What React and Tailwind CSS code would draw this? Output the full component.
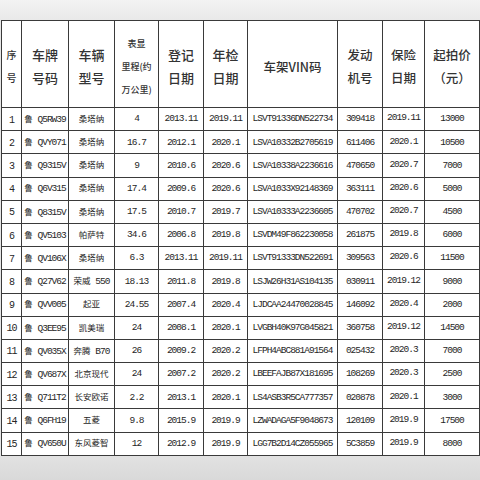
import React from "react";

const rows = [
  ["1", "鲁 Q5RW39", "桑塔纳", "4", "2013.11", "2019.11", "LSVT91336DN522734", "309418", "2019.11", "13000"],
  ["2", "鲁 QVY071", "桑塔纳", "16.7", "2012.1", "2020.1", "LSVA10332B2705619", "611406", "2020.1", "10500"],
  ["3", "鲁 Q9315V", "桑塔纳", "9", "2010.6", "2020.6", "LSVA10338A2236616", "470650", "2020.7", "7000"],
  ["4", "鲁 Q6V315", "桑塔纳", "17.4", "2009.6", "2020.6", "LSVA1033X92148369", "363111", "2020.6", "5000"],
  ["5", "鲁 Q8315V", "桑塔纳", "17.5", "2010.7", "2019.7", "LSVA10333A2236605", "470702", "2020.7", "4500"],
  ["6", "鲁 QV5103", "帕萨特", "34.6", "2006.8", "2019.8", "LSVDM49F862230058", "261875", "2019.8", "6000"],
  ["7", "鲁 QV106X", "桑塔纳", "6.3", "2013.11", "2019.11", "LSVT91333DN522691", "309563", "2020.6", "11500"],
  ["8", "鲁 Q27V62", "荣威 550", "18.13", "2011.8", "2019.8", "LSJW26H31AS104135", "030911", "2019.12", "9000"],
  ["9", "鲁 QVV005", "起亚", "24.55", "2007.4", "2020.4", "LJDCAA24470028845", "146092", "2020.4", "2000"],
  ["10", "鲁 Q3EE95", "凯美瑞", "24", "2008.1", "2020.1", "LVGBH40K97G045821", "360758", "2019.12", "14500"],
  ["11", "鲁 QV035X", "奔腾 B70", "26", "2009.2", "2020.2", "LFPH4ABC881A91564", "025432", "2020.3", "7000"],
  ["12", "鲁 QV687X", "北京现代", "24", "2007.2", "2020.2", "LBEEFAJB87X181695", "108269", "2020.3", "2500"],
  ["13", "鲁 Q711T2", "长安欧诺", "2.2", "2013.1", "2020.1", "LS4ASB3R5CA777357", "020878", "2020.1", "3000"],
  ["14", "鲁 Q6FH19", "五菱", "9.8", "2015.9", "2019.9", "LZWADAGA5F9048673", "120109", "2019.9", "17500"],
  ["15", "鲁 QV650U", "东风菱智", "12", "2012.9", "2019.9", "LGG7B2D14CZ055965", "5C3859", "2019.9", "8000"],
];

const widths = [20, 47, 46, 44, 45, 44, 90, 45, 42, 55];

const headers = [
  { lines: ["序", "号"], cls: "text-[10px] leading-[23px]" },
  { lines: ["车牌", "号码"], cls: "text-[13px] leading-[23px]" },
  { lines: ["车辆", "型号"], cls: "text-[13px] leading-[23px]" },
  { lines: ["表显", "里程(约", "万公里)"], cls: "text-[9px] leading-[23px]" },
  { lines: ["登记", "日期"], cls: "text-[13px] leading-[23px]" },
  { lines: ["年检", "日期"], cls: "text-[13px] leading-[23px]" },
  { lines: ["车架VIN码"], cls: "text-[12.5px] leading-[23px]" },
  { lines: ["发动", "机号"], cls: "text-[12.5px] leading-[23px]" },
  { lines: ["保险", "日期"], cls: "text-[12.5px] leading-[23px]" },
  { lines: ["起拍价", "（元）"], cls: "text-[12.5px] leading-[23px]" },
];

// chinese runs get their own size, ascii stays mono
function Cell({ text }) {
  const parts = text.split(/([\u4e00-\u9fff]+)/).filter(Boolean);
  return parts.map((p, i) =>
    /[\u4e00-\u9fff]/.test(p) ? (
      <span key={i} className="text-[8.5px] tracking-normal" style={{ fontFamily: '"Noto Sans CJK SC", sans-serif' }}>
        {p}
      </span>
    ) : (
      <span key={i}>{p}</span>
    )
  );
}

export default function App() {
  return (
    <div className="flex h-[480px] w-[480px] flex-col overflow-hidden bg-[#e6e6e6]">
      <div className="h-[20px] shrink-0 bg-gradient-to-b from-[#f3f3f3] to-[#e9e9e9]" />
      <table className="ml-[1px] w-[478px] table-fixed border-collapse bg-white text-[#333]">
        <colgroup>
          {widths.map((w, i) => (
            <col key={i} style={{ width: w }} />
          ))}
        </colgroup>
        <thead>
          <tr className="h-[87px]">
            {headers.map((h, i) => (
              <th
                key={i}
                className={`border border-[#3a3a3a] p-0 pt-[4px] text-center align-middle font-medium ${h.cls}`}
                style={{ fontFamily: '"Noto Sans CJK SC", sans-serif' }}
              >
                {h.lines.map((l, j) => (
                  <div key={j} className="whitespace-nowrap">{l}</div>
                ))}
              </th>
            ))}
          </tr>
        </thead>
        <tbody style={{ fontFamily: '"Liberation Mono", "Noto Sans CJK SC", monospace' }}>
          {rows.map((r, i) => (
            <tr key={i} className="h-[23.2px]">
              {r.map((c, j) => (
                <td
                  key={j}
                  className={`whitespace-nowrap border border-[#3a3a3a] p-0 text-center align-middle leading-none text-[#262626] ${
                    j === 0 ? "pt-[3px] text-[10px] tracking-[-1px]" : "text-[9.5px] tracking-[-1px]"
                  } ${j === 8 ? "pb-[2px]" : ""}`}
                >
                  <Cell text={c} />
                </td>
              ))}
            </tr>
          ))}
        </tbody>
      </table>
      <div className="flex-1 bg-gradient-to-b from-[#e2e2e2] to-[#d9d9d9]" />
    </div>
  );
}
